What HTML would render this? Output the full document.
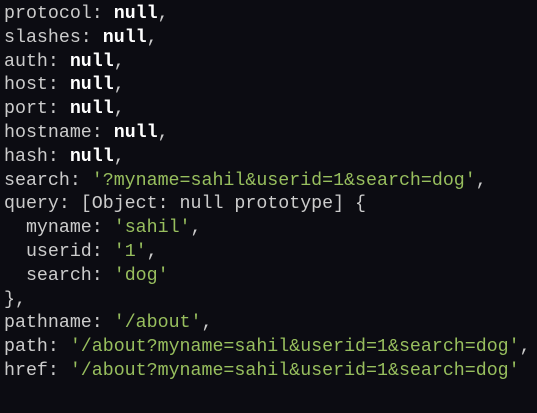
<!DOCTYPE html>
<html><head><style>
html,body{margin:0;padding:0;background:#0c0c12;width:537px;height:413px;overflow:hidden}
pre{margin:0;padding:3px 0 0 4px;font-family:"Liberation Mono",monospace;font-size:18.3px;line-height:23.8px;color:#cccccc}
b{color:#ffffff;font-weight:bold}
s{text-decoration:none;color:#98bf5e}
</style></head><body><pre>protocol: <b>null</b>,
slashes: <b>null</b>,
auth: <b>null</b>,
host: <b>null</b>,
port: <b>null</b>,
hostname: <b>null</b>,
hash: <b>null</b>,
search: <s>'?myname=sahil&amp;userid=1&amp;search=dog'</s>,
query: [Object: null prototype] {
  myname: <s>'sahil'</s>,
  userid: <s>'1'</s>,
  search: <s>'dog'</s>
},
pathname: <s>'/about'</s>,
path: <s>'/about?myname=sahil&amp;userid=1&amp;search=dog'</s>,
href: <s>'/about?myname=sahil&amp;userid=1&amp;search=dog'</s></pre></body></html>
